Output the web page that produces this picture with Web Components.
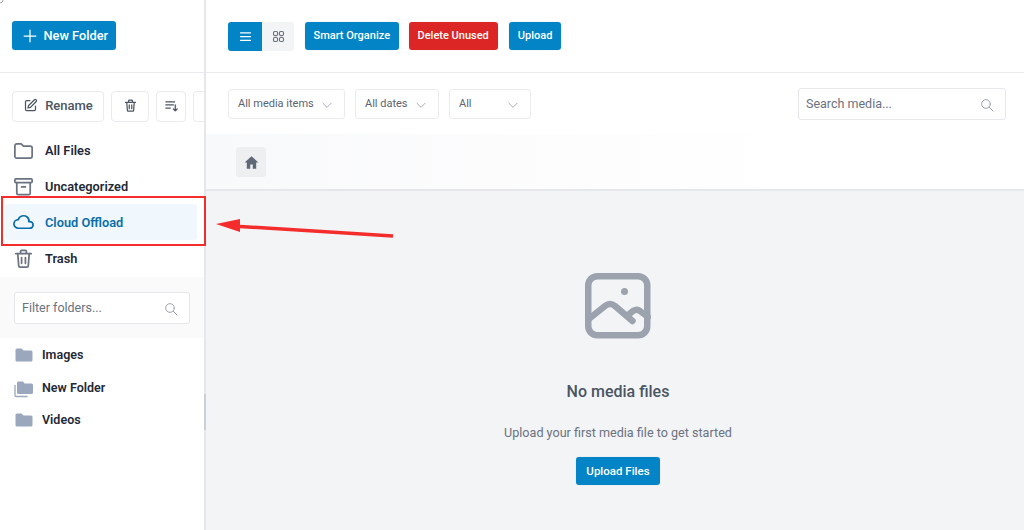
<!doctype html>
<html><head><meta charset="utf-8"><title>Media</title>
<style>html,body{margin:0;padding:0;background:#fff;font-family:Roboto,"Liberation Sans",sans-serif}</style>
</head><body>
<x-app>
  <x-sidebar slot="side"></x-sidebar>
  <x-main slot="main"></x-main>
</x-app>
<script>
const I={
plus:'<path d="M12 5v14M5 12h14"/>',
edit:'<path d="M11 4H6a2 2 0 0 0-2 2v12a2 2 0 0 0 2 2h12a2 2 0 0 0 2-2v-5"/><path d="M18.400 2.800a2 2 0 0 1 2.800 2.800L12 15l-4 1 1-4z"/>',
trash:'<path d="M4 7h16M9 7V4.500a1 1 0 0 1 1-1h4a1 1 0 0 1 1 1V7M6 7l1 12.500a1.500 1.500 0 0 0 1.500 1.500h7a1.500 1.500 0 0 0 1.500-1.500L18 7M10 11v6M14 11v6"/>',
sort:'<path d="M3 6h14M3 11h12M3 16h7M18 11v9M15 17.500l3 3 3-3"/>',
folder:'<path d="M3 7a2 2 0 0 1 2-2h4.500l2.500 2.500h7a2 2 0 0 1 2 2V18a2 2 0 0 1-2 2H5a2 2 0 0 1-2-2z"/>',
archive:'<rect x="3" y="4" width="18" height="4" rx="1"/><path d="M5 8v11a1.500 1.500 0 0 0 1.500 1.500h11A1.500 1.500 0 0 0 19 19V8M10 12.500h4"/>',
cloud:'<path d="M6.657 18c-2.572 0-4.657-2.007-4.657-4.483s2.085-4.482 4.657-4.482c.393-1.762 1.794-3.200 3.675-3.773 1.880-.572 3.956-.193 5.444 1 1.488 1.190 2.162 3.007 1.770 4.769h.990c1.913 0 3.464 1.560 3.464 3.486 0 1.927-1.551 3.487-3.465 3.487h-11.878"/>',
search:'<circle cx="10.500" cy="10.500" r="6.500"/><path d="M15.500 15.500 21 21"/>',
chev:'<path d="M5 9l7 7 7-7"/>',
list:'<path d="M4 6h16M4 12h16M4 18h16"/>',
grid:'<rect x="4" y="4" width="6.500" height="6.500" rx="2"/><rect x="13.500" y="4" width="6.500" height="6.500" rx="2"/><rect x="4" y="13.500" width="6.500" height="6.500" rx="2"/><rect x="13.500" y="13.500" width="6.500" height="6.500" rx="2"/>'
};
const svg=(n,s,w=2)=>`<svg width="${s}" height="${s}" viewBox="0 0 24 24" fill="none" stroke="currentColor" stroke-width="${w}" stroke-linecap="round" stroke-linejoin="round">${I[n]}</svg>`;

class Base extends HTMLElement{
  constructor(){super();this.attachShadow({mode:'open'});}
  set(html){this.shadowRoot.innerHTML=html;}
}
class XBtn extends Base{connectedCallback(){
  const c={blue:'#0284c7',red:'#dc2626'}[this.getAttribute('tone')]||'#0284c7';
  const h=this.getAttribute('h')||28, px=this.getAttribute('px')||9, fs=this.getAttribute('fs')||11, gap=this.getAttribute('gap')||4, pb=this.getAttribute('pb')||2, pt=this.getAttribute('pt')||0;
  this.set(`<style>:host{display:inline-flex;align-items:center;justify-content:center;gap:${gap}px;box-sizing:border-box;height:${h}px;padding:${pt}px ${px}px ${pb}px;background:${c};color:#fff;border-radius:3px;font:500 ${fs}px/1 Roboto,sans-serif;white-space:nowrap;box-shadow:0 0 0 .5px rgba(0,0,0,.05)}::slotted(svg){display:block;margin-top:-${pt}px}</style><slot></slot>`);
}}
class XOutline extends Base{connectedCallback(){
  const w=this.getAttribute('w');
  this.set(`<style>:host{display:inline-flex;flex:none;align-items:center;justify-content:center;gap:7px;box-sizing:border-box;height:31px;padding-bottom:2px;${w?`width:${w}px;`:''}background:#fff;border:1px solid #e9ebee;border-radius:4px;color:#4b5563;font:500 13px/1 Roboto,sans-serif}::slotted(svg){display:block}</style><slot></slot>`);
}}
class XSelect extends Base{connectedCallback(){
  const w=this.getAttribute('w');
  this.set(`<style>:host{display:flex;align-items:center;justify-content:space-between;box-sizing:border-box;width:${w}px;height:30px;padding:0 10px 1px 9px;background:#fff;border:1px solid #e9ebee;border-radius:3px;color:#5b6472;font:400 11px/1 Roboto,sans-serif;white-space:nowrap}span{display:flex;color:#9ca3af;margin-top:2px}</style><slot></slot><span>${svg('chev',14,1.500)}</span>`);
}}
class XSearch extends Base{connectedCallback(){
  const w=this.getAttribute('w'),h=this.getAttribute('h');
  this.set(`<style>:host{display:flex;align-items:center;justify-content:space-between;box-sizing:border-box;width:${w}px;height:${h}px;padding:1px 10px 0 7px;background:#fff;border:1px solid #e5e7eb;border-radius:3px;color:#6b7280;font:400 12.500px/1 Roboto,sans-serif}span{display:flex;color:#9ca3af}</style><slot></slot><span>${svg('search',16,1.500)}</span>`);
}}
class XNavItem extends Base{connectedCallback(){
  const a=this.hasAttribute('active');
  this.set(`<style>:host{display:flex;align-items:center;gap:10px;box-sizing:border-box;height:36px;margin:0 7px 0 5px;padding:2px 0 0 7px;border-radius:3px;background:${a?'#f0f7fd':'transparent'};color:${a?'#0a6fa8':'#1f2937'};font:600 12.800px/1 Roboto,sans-serif}span{display:flex;margin-top:-1px;color:${a?'#0a6fa8':'#6b7280'}}svg{display:block}</style><span>${svg(this.getAttribute('icon'),23,1.800)}</span><slot></slot>`);
}}
class XTreeItem extends Base{connectedCallback(){
  const st=this.hasAttribute('stack');
  const p=st
   ?'<path d="M1.500 7v10.500a1 1 0 0 0 1 1H14" fill="none" stroke="#9aa7bd" stroke-width="1.300"/><path d="M3.500 5a1.500 1.500 0 0 1 1.500-1.500h4.500L11 5.500h7A1.500 1.500 0 0 1 19.500 7v7.500A1.500 1.500 0 0 1 18 16H5a1.500 1.500 0 0 1-1.500-1.500z" fill="#9aa7bd"/>'
   :'<path d="M1.500 5a1.500 1.500 0 0 1 1.500-1.500h4.500L9.500 5.500H17A1.500 1.500 0 0 1 18.500 7v8A1.500 1.500 0 0 1 17 16.500H3A1.500 1.500 0 0 1 1.500 15z" fill="#9aa7bd"/>';
  this.set(`<style>:host{display:flex;align-items:center;gap:8px;box-sizing:border-box;height:32.500px;padding:2px 0 0 ${st?13:14}px;color:#1f2937;font:600 12.500px/1 Roboto,sans-serif}svg{display:block}</style><svg width="${st?21:20}" height="20" viewBox="0 0 20 20">${p}</svg><slot></slot>`);
}}
class XSidebar extends Base{connectedCallback(){
  this.set(`<style>
  :host{display:flex;flex-direction:column;position:relative;box-sizing:border-box;width:206px;height:530px;padding-right:2px;overflow:hidden;background:linear-gradient(#e5e7eb,#e5e7eb) right top/2px 100% no-repeat #fff}
  .top{box-sizing:border-box;height:73px;padding:21px 12px 0;border-bottom:1px solid #e9ebee}
  .acts{display:flex;gap:7px;height:31px;padding:18px 0 10px 12px;overflow:hidden}
  .filter{margin-top:1px;background:#fafafa;padding:15px 14px;height:61px;box-sizing:border-box}
  .handle{position:absolute;right:0;top:394px;width:2px;height:36px;background:#ccd0d6}
  </style>
  <div class="top"><x-btn h="29" px="7.500" fs="12.800" pb="0" pt="2">${svg('plus',20,1.500)}<span>New Folder</span></x-btn></div>
  <div class="acts">
   <x-outline w="92">${svg('edit',15,2)}<span>Rename</span></x-outline>
   <x-outline w="38">${svg('trash',15,2)}</x-outline>
   <x-outline w="30">${svg('sort',15,2)}</x-outline>
   <x-outline w="30"></x-outline>
  </div>
  <nav>
   <x-nav-item icon="folder">All Files</x-nav-item>
   <x-nav-item icon="archive">Uncategorized</x-nav-item>
   <x-nav-item icon="cloud" active>Cloud Offload</x-nav-item>
   <x-nav-item icon="trash">Trash</x-nav-item>
  </nav>
  <div class="filter"><x-search w="176" h="32">Filter folders...</x-search></div>
  <div class="tree">
   <x-tree-item>Images</x-tree-item>
   <x-tree-item stack>New Folder</x-tree-item>
   <x-tree-item>Videos</x-tree-item>
  </div>
  <div class="handle"></div>`);
}}
class XToggle extends Base{connectedCallback(){
  this.set(`<style>:host{display:flex;height:29px;border-radius:3px;overflow:hidden;flex:none}
  div{display:flex;align-items:center;justify-content:center}
  .a{width:34px;background:#0284c7;color:#fff}.b{width:32px;background:#f3f4f6;color:#6b7280}</style>
  <div class="a">${svg('list',15,2)}</div><div class="b">${svg('grid',15,1.800)}</div>`);
}}
class XEmpty extends Base{connectedCallback(){
  this.set(`<style>:host{display:flex;flex-direction:column;align-items:center;flex:1;background:#f3f4f6;padding:82px 0 0 6px;min-height:0}
  svg{display:block}
  h2{margin:43px 0 0;font:500 16px/20px Roboto,sans-serif;color:#4b5563}
  p{margin:21px 0 0;font:400 12.600px/20px Roboto,sans-serif;color:#6b7280}
  x-btn{margin-top:14px}</style>
  <svg width="66" height="66" viewBox="0 0 66 66" fill="none" stroke="#9ca3af" stroke-width="6.500" stroke-linecap="round" stroke-linejoin="round">
   <rect x="3.250" y="3.250" width="59" height="59" rx="9"/>
   <path d="M5 45 20 33q5-4 10 0l17.500 15"/><path d="M43 42l5-4q4-2.500 7 0l8 6"/>
   <circle cx="39.500" cy="18.500" r="3.500" fill="#9ca3af" stroke="none"/>
  </svg>
  <h2>No media files</h2><p>Upload your first media file to get started</p>
  <x-btn h="28" px="10" fs="11.500" pb="0" pt="2">Upload Files</x-btn>`);
}}
class XMain extends Base{connectedCallback(){
  this.set(`<style>
  :host{display:flex;flex-direction:column;flex:1;height:530px;min-width:0;background:#fff}
  .tb{box-sizing:border-box;height:73px;padding:22px 0 0 22px;display:flex;gap:11px;align-items:flex-start;border-bottom:1px solid #e9ebee}
  .tb x-btn[tone]{margin-left:-1px}
  .fl{box-sizing:border-box;height:61px;padding:16px 18px 0 22px;display:flex;gap:10px;align-items:flex-start}
  .fl x-search{margin:-1px 0 0 auto}
  .bc{box-sizing:border-box;height:57px;padding:13px 0 0 30px;background:linear-gradient(90deg,#f8f9fa,#fff 75%);border-bottom:2px solid #e5e7eb}
  .home{width:30px;height:30px;background:#eeeff1;border-radius:3px;display:flex;align-items:center;justify-content:center}
  svg{display:block}
  </style>
  <div class="tb"><x-toggle></x-toggle><x-btn px="8.500">Smart Organize</x-btn><x-btn tone="red">Delete Unused</x-btn><x-btn>Upload</x-btn></div>
  <div class="fl"><x-select w="117">All media items</x-select><x-select w="84">All dates</x-select><x-select w="82">All</x-select><x-search w="208" h="32">Search media...</x-search></div>
  <div class="bc"><div class="home"><svg width="15" height="15" viewBox="0 0 24 24" fill="#5f6877"><path d="M12 2 1 12h3.500v10H10v-7h4v7h5.500V12H23z"/></svg></div></div>
  <x-empty></x-empty>`);
}}
class XCallout extends Base{connectedCallback(){
  this.set(`<style>:host{display:block;position:absolute;inset:0;pointer-events:none}
  .box{position:absolute;left:1px;top:196px;width:201px;height:46px;border:2px solid #f52c2c}
  svg{position:absolute;left:0;top:0}</style>
  <div class="box"></div>
  <svg width="1024" height="530"><path d="M393 236 240 226.500" stroke="#f52c2c" stroke-width="3.500" fill="none"/><path d="M216 224 240 219V232z" fill="#f52c2c"/><path d="M0 3a3 3 0 0 0 3-3" stroke="#aaa" fill="none"/></svg>`);
}}
class XApp extends Base{connectedCallback(){
  this.set(`<style>:host{display:flex;position:relative;width:1024px;height:530px;overflow:hidden}</style><slot name="side"></slot><slot name="main"></slot><x-callout></x-callout>`);
}}
for(const [n,c] of Object.entries({'x-btn':XBtn,'x-outline':XOutline,'x-select':XSelect,'x-search':XSearch,'x-nav-item':XNavItem,'x-tree-item':XTreeItem,'x-toggle':XToggle,'x-empty':XEmpty,'x-callout':XCallout,'x-sidebar':XSidebar,'x-main':XMain,'x-app':XApp})) customElements.define(n,c);
</script>
</body></html>
